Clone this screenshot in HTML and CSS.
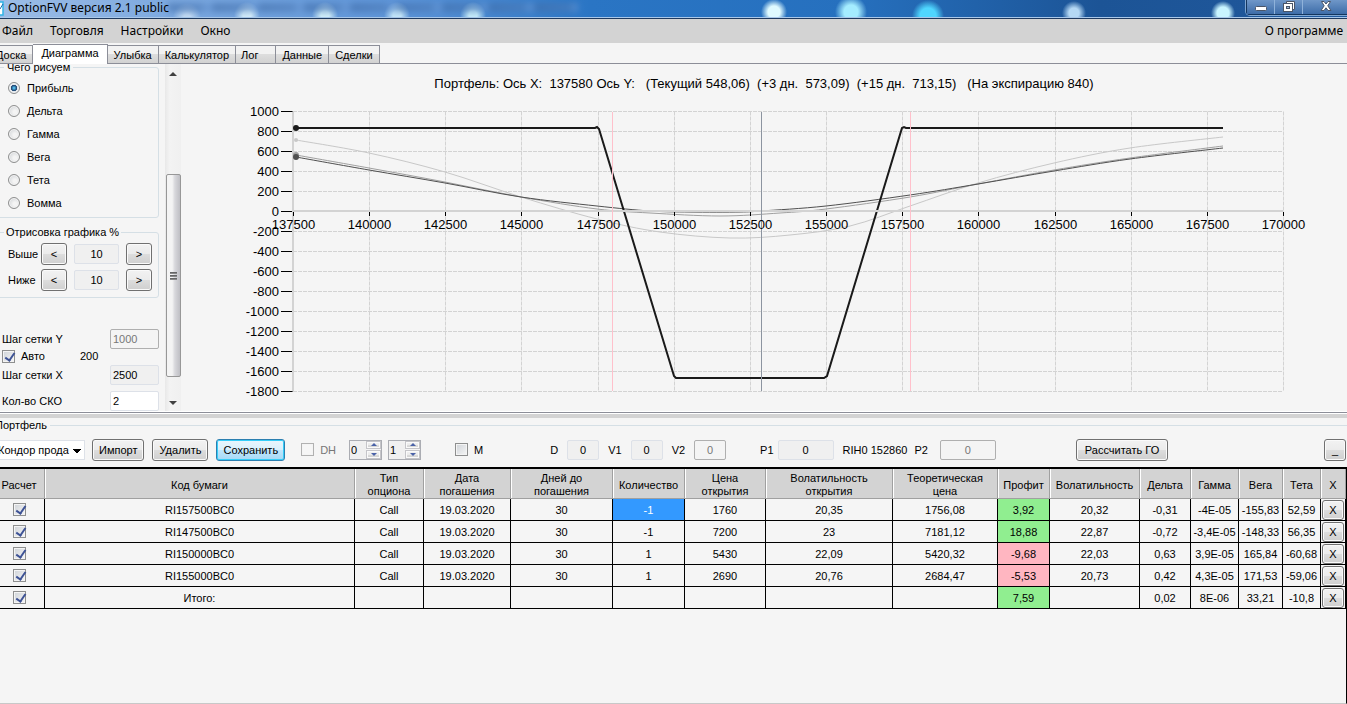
FILE: index.html
```html
<!DOCTYPE html>
<html lang="ru">
<head>
    <meta charset="UTF-8">
    <meta name="viewport" content="width=device-width, initial-scale=1.0">
    <title>OptionFVV версия 2.1 public</title>
    <link rel="stylesheet" href="styles.css">
</head>
<body>
    <header class="titlebar">
        <svg class="app-icon" width="4" height="16" viewBox="0 0 4 16"><path d="M0 2H3V15H0" fill="#fff" stroke="#2fb4e6" stroke-width="1.5"/><path d="M0 9L3 4" stroke="#1c6fae"/></svg>
        <h1>OptionFVV версия 2.1 public</h1>
        <div class="window-buttons">
            <button aria-label="Свернуть"><svg width="14" height="12" viewBox="0 0 14 12"><rect x="1.5" y="5.5" width="11" height="4" rx="1" fill="#fff" stroke="#4a5568"/></svg></button>
            <button aria-label="Развернуть"><svg width="14" height="13" viewBox="0 0 14 13"><path d="M4.500 3V0.500H12.500V8.500H10" fill="#fff" stroke="#4a5568"/><rect x="1.500" y="2.500" width="9" height="8" fill="#fff" stroke="#4a5568"/><rect x="4.500" y="5.500" width="3" height="2" fill="#9db8da" stroke="#4a5568"/></svg></button>
            <button class="close" aria-label="Закрыть"><svg width="14" height="12" viewBox="0 0 14 12"><path d="M2.500 0.500H5L7 3L9 0.500H11.500L8.800 4.800L12 9.500H9L7 6.800L5 9.500H2L5.200 4.800Z" fill="#fff" stroke="#4a5568"/></svg></button>
        </div>
    </header>

    <nav class="menu">
        <a href="#">Файл</a>
        <a href="#">Торговля</a>
        <a href="#">Настройки</a>
        <a href="#">Окно</a>
        <a class="about" href="#">О программе</a>
    </nav>

    <div class="tabs">
        <button>Доска</button>
        <button class="active">Диаграмма</button>
        <button>Улыбка</button>
        <button>Калькулятор</button>
        <button class="log">Лог</button>
        <button>Данные</button>
        <button>Сделки</button>
    </div>

    <main class="diagram">
        <aside class="options">
            <fieldset class="what">
                <legend>Чего рисуем</legend>
                <label><input type="radio" name="what" checked>Прибыль</label>
                <label><input type="radio" name="what">Дельта</label>
                <label><input type="radio" name="what">Гамма</label>
                <label><input type="radio" name="what">Вега</label>
                <label><input type="radio" name="what">Тета</label>
                <label><input type="radio" name="what">Вомма</label>
            </fieldset>
            <fieldset class="range">
                <legend>Отрисовка графика %</legend>
                <div class="range-row">
                    <label for="above">Выше</label>
                    <button>&lt;</button>
                    <input id="above" type="text" value="10" readonly>
                    <button>&gt;</button>
                </div>
                <div class="range-row">
                    <label for="below">Ниже</label>
                    <button>&lt;</button>
                    <input id="below" type="text" value="10" readonly>
                    <button>&gt;</button>
                </div>
            </fieldset>
            <div class="grid-settings">
                <div class="setting">
                    <label for="step_y">Шаг сетки Y</label>
                    <input id="step_y" type="text" value="1000" disabled>
                </div>
                <div class="auto">
                    <label><input type="checkbox" checked>Авто</label>
                    <span>200</span>
                </div>
                <div class="setting">
                    <label for="step_x">Шаг сетки X</label>
                    <input id="step_x" type="text" value="2500" readonly>
                </div>
                <div class="setting">
                    <label for="sko">Кол-во СКО</label>
                    <input id="sko" class="editable" type="text" value="2">
                </div>
            </div>
        </aside>
        <div class="scrollbar">
            <span class="arrow up"></span>
            <div class="thumb"><i></i><i></i><i></i></div>
            <span class="arrow down"></span>
        </div>
        <section class="chart">
            <h2>Портфель: Ось X:  137580 Ось Y:   (Текущий 548,06)  (+3 дн.  573,09)  (+15 дн.  713,15)   (На экспирацию 840)</h2>
            <svg id="plot" viewBox="181 99 1166 312"></svg>
        </section>
    </main>

    <div class="splitter"></div>

    <section class="portfolio">
        <div class="group-title"><span>Портфель</span></div>
        <div class="toolbar">
            <select aria-label="Портфель"><option>Кондор прода</option></select>
            <button>Импорт</button>
            <button>Удалить</button>
            <button class="primary">Сохранить</button>
            <label class="dh"><input type="checkbox" disabled>DH</label>
            <div class="spin"><input type="text" value="0" aria-label="DH от"><div><button aria-label="Больше"></button><button class="less" aria-label="Меньше"></button></div></div>
            <div class="spin"><input type="text" value="1" aria-label="DH до"><div><button aria-label="Больше"></button><button class="less" aria-label="Меньше"></button></div></div>
            <label class="m"><input type="checkbox">M</label>
            <label class="field d">D<input type="text" value="0" readonly></label>
            <label class="field">V1<input type="text" value="0" readonly></label>
            <label class="field">V2<input type="text" value="0" disabled></label>
            <label class="field wide p1">P1<input type="text" value="0" readonly></label>
            <span>RIH0 152860</span>
            <label class="field wide p2">P2<input type="text" value="0" disabled></label>
            <button class="calc">Рассчитать ГО</button>
            <button class="collapse" aria-label="Свернуть панель">_</button>
        </div>
        <div class="grid">
            <table>
                <colgroup>
                    <col class="w45"><col><col class="w69"><col class="w87"><col class="w102"><col class="w72"><col class="w81"><col class="w127">
                    <col class="w105"><col class="w52"><col class="w90"><col class="w51"><col class="w48"><col class="w44"><col class="w38"><col class="w25">
                </colgroup>
                <thead>
                    <tr>
                        <th>Расчет</th>
                        <th>Код бумаги</th>
                        <th>Тип<br>опциона</th>
                        <th>Дата<br>погашения</th>
                        <th>Дней до<br>погашения</th>
                        <th>Количество</th>
                        <th>Цена<br>открытия</th>
                        <th>Волатильность<br>открытия</th>
                        <th>Теоретическая<br>цена</th>
                        <th>Профит</th>
                        <th>Волатильность</th>
                        <th>Дельта</th>
                        <th>Гамма</th>
                        <th>Вега</th>
                        <th>Тета</th>
                        <th>X</th>
                    </tr>
                </thead>
                <tbody id="rows"></tbody>
            </table>
        </div>
    </section>

    <script src="script.js"></script>
</body>
</html>
```
FILE: styles.css
```css
* {
    margin: 0;
    padding: 0;
    box-sizing: border-box;
}

body {
    min-height: 100vh;
    display: flex;
    flex-direction: column;
    overflow-x: hidden;
    background-color: #f5f5f5;
    color: #000;
    font-family: "Liberation Sans", Arial, sans-serif;
    font-size: 11px;
    line-height: 14px;
}

button, input, select {
    font: inherit;
    color: inherit;
}

/* Title bar */
.titlebar {
    position: relative;
    overflow: hidden;
    height: 19px;
    display: flex;
    align-items: flex-start;
    border-bottom: 1px solid #1f3a5f;
    box-shadow: inset 0 -1px 0 #a9c8ea;
    background:
        radial-gradient(circle at 187px 17px, #c4dcf4 3px, transparent 14px),
        radial-gradient(circle at 247px 15px, #d3ecfa 4px, transparent 13px),
        radial-gradient(circle at 325px 15px, #d3f0fa 4px, transparent 13px),
        radial-gradient(circle at 397px 15px, #c6e8fa 4px, transparent 13px),
        radial-gradient(circle at 473px 15px, #c6ecfa 4px, transparent 13px),
        radial-gradient(circle at 774px 12px, #dffaff 6px, transparent 13px),
        radial-gradient(circle at 851px 12px, #a4ecff 7px, transparent 16px),
        radial-gradient(circle at 928px 16px, #4fd6ff 8px, transparent 16px),
        radial-gradient(circle at 1074px 13px, #b4d8f4 5px, transparent 12px),
        radial-gradient(circle at 1223px 13px, #c8f4ff 6px, transparent 12px),
        linear-gradient(to right, #9dbde6 0, #7eaae0 160px, #5c94d8 400px, #2a75c4 590px, #2670be 850px, #1c5496 1100px, #20589c 100%);
}

.titlebar::before {
    content: "";
    position: absolute;
    left: 168px;
    top: 3px;
    width: 410px;
    height: 9px;
    background: repeating-linear-gradient(to right, #3f6ca8 0, #4f7cb8 34px, #6d9bd8 40px, #4674b2 46px);
    opacity: 0.6;
    filter: blur(3px);
}

.app-icon {
    flex: none;
}

.titlebar h1 {
    margin-left: 4px;
    font: 12px/16px "Noto Sans", "Open Sans", sans-serif;
    position: relative;
}

.window-buttons {
    display: flex;
    margin-left: auto;
    height: 15px;
    border: 1px solid #14365f;
    border-width: 0 0 1px 1px;
    border-radius: 0 0 0 4px;
    box-shadow: 0 0 0 1px #7fa6d2;
}

.window-buttons button {
    width: 28px;
    height: 14px;
    border: none;
    border-right: 1px solid #8fb2da;
    background: linear-gradient(#6f97c8, #3d6ca8);
}

.window-buttons .close {
    width: 44px;
    padding-left: 2px;
    border-right: none;
}

.window-buttons svg {
    display: block;
    margin: 0 auto;
}

/* Menu */
.menu {
    display: flex;
    align-items: center;
    gap: 17px;
    height: 24px;
    padding: 0 4px 0 2px;
    background-color: #d3d3d3;
    font: 12px/16px "Noto Sans", "Open Sans", sans-serif;
}

.menu a {
    color: #000;
    text-decoration: none;
}

.menu .about {
    margin-left: auto;
}

/* Tabs */
.tabs {
    display: flex;
    align-items: flex-end;
    height: 21px;
    margin-left: -10px;
    border-bottom: 1px solid #8c8e98;
}

.tabs button {
    height: 18px;
    padding: 0 6px;
    border: 1px solid #8c8e98;
    border-width: 1px 1px 0 0;
    background: linear-gradient(#f2f2f2 50%, #dddddd 50%, #d2d2d2);
    white-space: nowrap;
}

.tabs .active {
    height: 20px;
    padding: 0 8px 3px;
    margin-bottom: -1px;
    background: #fff;
}

.tabs .log {
    padding: 0 17px 0 5px;
}

/* Left panel */
.diagram {
    display: flex;
    overflow: hidden;
    border-bottom: 1px solid #fff;
}

.options {
    flex: none;
    width: 159px;
}

fieldset {
    margin-left: -4px;
    border: 1px solid #d5dfe5;
    border-radius: 3px;
}

.what {
    margin-top: -4px;
    padding: 2px 0 3px 11px;
}

.what legend {
    margin-left: -4px;
    padding: 0 3px;
}

.what label {
    display: flex;
    align-items: center;
    gap: 7px;
    height: 23px;
}

input[type="radio"] {
    appearance: none;
    width: 12px;
    height: 12px;
    border: 1px solid #8e8f8f;
    border-radius: 50%;
    background: radial-gradient(circle at 60% 60%, #f4f4f4 20%, #c8ccd0);
    box-shadow: inset 0 0 0 1px #f4f4f4;
}

input[type="radio"]:checked {
    background: radial-gradient(circle, #4fb4e4 10%, #1a3f6c 40%, #dfe4ea 50%);
}

.range {
    margin-top: 7px;
    padding: 2px 6px 4px 11px;
}

.range legend {
    margin-left: -4px;
    padding: 0 2px;
}

.range-row {
    display: flex;
    align-items: center;
    height: 26px;
}

.range-row label {
    width: 33px;
}

.range-row button {
    width: 26px;
    height: 22px;
}

.range-row input {
    width: 45px;
    margin: 0 7px;
    text-align: center;
}

.options button, .toolbar button, td button {
    border: 1px solid #707070;
    border-radius: 3px;
    background: linear-gradient(#f2f2f2, #ebebeb 50%, #dddddd 50%, #cfcfcf);
    box-shadow: inset 0 0 0 1px #fafafa;
}

input[type="text"] {
    height: 20px;
    border: 1px solid #dde1e8;
    border-radius: 2px;
    background-color: #f0f0f0;
}

input[type="text"]:disabled {
    border-color: #afafaf;
    background-color: #f4f4f4;
    color: #777;
}

.grid-settings {
    margin-top: 31px;
    padding-left: 2px;
}

.setting {
    display: flex;
    align-items: center;
    justify-content: space-between;
    margin-bottom: 6px;
}

.setting:last-child {
    margin-bottom: 0;
}

.setting input {
    width: 49px;
    padding-left: 2px;
}

.setting .editable {
    background-color: #fff;
}

.auto {
    display: flex;
    margin: -6px 0 2px;
}

.auto label {
    display: flex;
    align-items: center;
    gap: 6px;
    width: 78px;
}

input[type="checkbox"] {
    appearance: none;
    width: 13px;
    height: 13px;
    border: 1px solid #8e8f8f;
    background: linear-gradient(135deg, #cfd3d8, #f6f6f6);
    box-shadow: inset 0 0 0 1px #f4f4f4;
}

input[type="checkbox"]:disabled {
    border-color: #b1b1b1;
    background: #f6f6f6;
}

input[type="checkbox"]:checked::after {
    content: "";
    display: block;
    width: 4px;
    height: 8px;
    margin: 0 0 0 4px;
    border: solid #3d5295;
    border-width: 0 2px 2px 0;
    transform: rotate(35deg);
}

.scrollbar {
    flex: none;
    display: flex;
    flex-direction: column;
    align-items: center;
    width: 16px;
    margin-left: 6px;
    padding: 8px 0 6px;
    background: linear-gradient(to right, #e8e8e8, #f3f3f3 30%, #f0f0f0);
}

.arrow {
    border: 4px solid transparent;
    border-top-width: 0;
    border-bottom-color: #404040;
}

.arrow.down {
    border-width: 4px 4px 0;
    border-top-color: #404040;
}

.thumb {
    display: flex;
    flex-direction: column;
    justify-content: center;
    align-items: center;
    gap: 1px;
    width: 15px;
    height: 203px;
    margin: auto 0 24px;
    border: 1px solid #979797;
    border-radius: 2px;
    background: linear-gradient(to right, #f4f4f4 40%, #d8d8dc 60%, #bfbfc4);
}

.thumb i {
    width: 7px;
    height: 2px;
    background: linear-gradient(#555, #999);
}

/* Chart */
.chart {
    flex: 1;
    min-width: 0;
}

.chart h2 {
    padding-top: 11px;
    height: 35px;
    font-size: 13px;
    line-height: 17px;
    font-weight: normal;
    text-align: center;
    white-space: pre;
}

.chart svg {
    display: block;
    width: 100%;
}

.chart text {
    font: 13px "Liberation Sans", Arial, sans-serif;
}

.grid-line {
    stroke: #d3d3d3;
    stroke-dasharray: 4 1;
}

.tick {
    stroke: #000;
}

.axis {
    stroke: #d3d3d3;
    stroke-width: 2;
}

.sko {
    stroke: #ffc0cb;
}

.price {
    stroke: #8c94a0;
}

.curve {
    fill: none;
}

.splitter {
    height: 6px;
    border-top: 1px solid #8c8e98;
    border-bottom: 4px solid #d3d3d3;
    background-color: #fff;
}

/* Portfolio */
.portfolio {
    flex: 1;
    display: flex;
    flex-direction: column;
}

.group-title {
    display: flex;
    align-items: center;
    gap: 3px;
    margin-left: -5px;
}

.group-title::after {
    content: "";
    flex: 1;
    height: 1px;
    background-color: #d5dfe5;
}

.toolbar {
    display: flex;
    align-items: center;
    height: 35px;
    white-space: nowrap;
}

.toolbar select {
    appearance: none;
    width: 90px;
    height: 20px;
    margin: 0 7px 0 -5px;
    padding: 0 0 0 2px;
    border: 1px solid #dde1e8;
    background: linear-gradient(#000, #000) no-repeat 77px 8px / 8px 1px,
        linear-gradient(#000, #000) no-repeat 78px 9px / 6px 1px,
        linear-gradient(#000, #000) no-repeat 79px 10px / 4px 1px,
        linear-gradient(#000, #000) no-repeat 80px 11px / 2px 1px, #fff;
}

.toolbar button {
    height: 22px;
    padding: 0 6px;
    margin-right: 8px;
}

.toolbar .primary {
    border-color: #2c7fb0;
    background: linear-gradient(#eaf6fd, #d9f0fc 50%, #bee6fd 50%, #a7d9f5);
    box-shadow: inset 0 0 0 1px #36cdf8;
}

.dh, .m, .field {
    display: flex;
    align-items: center;
}

.dh, .m {
    gap: 6px;
}

.dh {
    margin: 0 13px 0 8px;
    color: #777;
}

.m {
    margin: 0 0 0 28px;
}

.spin {
    display: flex;
    width: 33px;
    height: 20px;
    margin-right: 6px;
    border: 1px solid #abadb3;
}

.spin input {
    width: 16px;
    height: 18px;
    padding-left: 1px;
    border: none;
}

.spin div {
    display: grid;
    gap: 1px;
    width: 15px;
}

.spin div button {
    display: grid;
    place-items: center;
    height: auto;
    margin: 0;
    padding: 0;
    border-color: #c5c5c9;
    border-radius: 0;
}

.spin button::before {
    content: "";
    border: 3px solid transparent;
    border-top-width: 0;
    border-bottom-color: #4a62a8;
}

.spin .less::before {
    border-width: 3px 3px 0;
    border-top-color: #4a62a8;
}

.field {
    gap: 9px;
    margin-right: 9px;
}

.field input {
    width: 32px;
    text-align: center;
}

.d {
    margin-left: 67px;
}

.wide input {
    width: 56px;
}

.p1 {
    gap: 4px;
    margin-left: 25px;
}

.p2 {
    gap: 12px;
    margin-left: 7px;
}

.toolbar .calc {
    margin-left: 71px;
    padding: 0 8px;
}

.toolbar .collapse {
    width: 22px;
    margin: 0 1px 0 auto;
}

/* Table */
.grid {
    flex: 1;
    border: 1px solid #000;
    border-width: 2px 1px 1px 0;
    border-bottom-color: #c8c8c8;
}

table {
    width: 100%;
    table-layout: fixed;
    border-collapse: separate;
    border-spacing: 0;
    text-align: center;
}

.w25 { width: 25px; }
.w38 { width: 38px; }
.w44 { width: 44px; }
.w45 { width: 45px; }
.w48 { width: 48px; }
.w51 { width: 51px; }
.w52 { width: 52px; }
.w69 { width: 69px; }
.w72 { width: 72px; }
.w81 { width: 81px; }
.w87 { width: 87px; }
.w90 { width: 90px; }
.w102 { width: 102px; }
.w105 { width: 105px; }
.w127 { width: 127px; }

th {
    height: 30px;
    padding-top: 3px;
    border-right: 1px solid #a0a0a0;
    border-bottom: 1px solid #a0a0a0;
    background-color: #d3d3d3;
    box-shadow: inset 1px 0 0 #fff;
    font-weight: normal;
    line-height: 13px;
    white-space: nowrap;
}

th:first-child {
    padding-right: 6px;
    box-shadow: none;
}

td {
    height: 22px;
    border-right: 1px solid #000;
    border-bottom: 1px solid #000;
    line-height: 14px;
    white-space: nowrap;
}

td:first-child {
    padding-right: 6px;
}

td:first-child input {
    display: block;
    margin: 0 auto;
}

td.selected {
    background-color: #3399ff;
    color: #fff;
}

td.gain {
    background-color: #90ee90;
}

td.loss {
    background-color: #ffb6c1;
}

td button {
    display: block;
    width: 22px;
    height: 20px;
    margin: 0 auto;
}
```
FILE: script.js
```javascript
const SVG_NS = 'http://www.w3.org/2000/svg';
const plot = document.getElementById('plot');

const left = 293, right = 1283, top0 = 111;
const xPos = value => Math.round(left + (value - 137500) * (right - left) / 32500) + 0.5;
const yPos = value => top0 + (1000 - value) / 10 + 0.5;

function add(tag, attrs, text) {
    const el = document.createElementNS(SVG_NS, tag);
    for (const name in attrs) el.setAttribute(name, attrs[name]);
    if (text !== undefined) el.textContent = text;
    plot.appendChild(el);
}

function line(cls, x1, y1, x2, y2) {
    add('line', { class: cls, x1, y1, x2, y2 });
}

// smooth line through the points
function curve(points, color, width) {
    let d = `M${points[0]}`;
    for (let i = 0; i < points.length - 1; i++) {
        const p0 = points[i - 1] || points[i];
        const p1 = points[i];
        const p2 = points[i + 1];
        const p3 = points[i + 2] || p2;
        d += `C${p1[0] + (p2[0] - p0[0]) / 6},${p1[1] + (p2[1] - p0[1]) / 6} `
            + `${p2[0] - (p3[0] - p1[0]) / 6},${p2[1] - (p3[1] - p1[1]) / 6} ${p2}`;
    }
    add('path', { class: 'curve', d, stroke: color, 'stroke-width': width });
}

// grid
for (let y = 1000; y >= -1800; y -= 200) {
    line('grid-line', left, yPos(y), right, yPos(y));
    line('tick', 281, yPos(y), 293, yPos(y));
}
for (let x = 137500; x <= 170000; x += 2500) {
    line('grid-line', xPos(x), yPos(1000), xPos(x), yPos(-1800));
}
line('axis', 293, yPos(1000), 293, yPos(-1800));

// curves
curve([[296, 140], [369, 153], [445, 172], [521, 197], [597, 219], [660, 232], [730, 238], [790, 235], [850, 226], [910, 206], [978, 183], [1054, 163], [1130, 148], [1223, 137]], '#c8c8c8', 1);
curve([[296, 155], [369, 168], [445, 182], [521, 197], [597, 209], [650, 213], [720, 216], [780, 213], [826, 209], [910, 197], [978, 184], [1054, 170], [1130, 158], [1223, 146]], '#a0a0a0', 1);
curve([[296, 157], [369, 170], [445, 183], [521, 197], [597, 206], [650, 211], [690, 212], [740, 212], [761, 211], [826, 206], [910, 195], [978, 184], [1054, 171], [1130, 159], [1223, 148]], '#505050', 1);
add('polyline', { class: 'curve', points: '296,128 595,128 597,127 599,129 674,376 676,378 824,378 827,376 902,128 904,127 906,128 1223,128', stroke: '#1a1a1a', 'stroke-width': 2 });

add('circle', { cx: 296, cy: 140, r: 2, fill: '#c8c8c8' });
add('circle', { cx: 296, cy: 155, r: 3, fill: '#a0a0a0' });
add('circle', { cx: 296, cy: 157, r: 3, fill: '#505050' });
add('circle', { cx: 296, cy: 128, r: 3, fill: '#1a1a1a' });

line('axis', left, 211, right, 211);
line('sko', 612.5, 112, 612.5, 391);
line('price', 761.5, 112, 761.5, 391);
line('sko', 910.5, 112, 910.5, 391);

// labels
for (let y = 1000; y >= -1800; y -= 200) {
    add('text', { x: 279, y: yPos(y) + 4, 'text-anchor': 'end' }, y);
}
for (let x = 137500; x <= 170000; x += 2500) {
    line('tick', xPos(x), 212, xPos(x), 216);
    add('text', { x: xPos(x), y: 229, 'text-anchor': 'middle' }, x);
}

// portfolio rows
const rows = [
    ['RI157500BC0', 'Call', '19.03.2020', '30', '-1', '1760', '20,35', '1756,08', '3,92', '20,32', '-0,31', '-4E-05', '-155,83', '52,59'],
    ['RI147500BC0', 'Call', '19.03.2020', '30', '-1', '7200', '23', '7181,12', '18,88', '22,87', '-0,72', '-3,4E-05', '-148,33', '56,35'],
    ['RI150000BC0', 'Call', '19.03.2020', '30', '1', '5430', '22,09', '5420,32', '-9,68', '22,03', '0,63', '3,9E-05', '165,84', '-60,68'],
    ['RI155000BC0', 'Call', '19.03.2020', '30', '1', '2690', '20,76', '2684,47', '-5,53', '20,73', '0,42', '4,3E-05', '171,53', '-59,06'],
    ['Итого:', '', '', '', '', '', '', '', '7,59', '', '0,02', '8E-06', '33,21', '-10,8']
];

document.getElementById('rows').innerHTML = rows.map((row, r) => {
    const cells = row.map((value, c) => {
        let cls = '';
        if (r === 0 && c === 4) cls = 'selected';
        if (c === 8) cls = value.startsWith('-') ? 'loss' : 'gain';
        return `<td class="${cls}">${value}</td>`;
    }).join('');
    return `<tr><td><input type="checkbox" aria-label="${row[0]}" checked></td>${cells}<td><button>X</button></td></tr>`;
}).join('');
```
